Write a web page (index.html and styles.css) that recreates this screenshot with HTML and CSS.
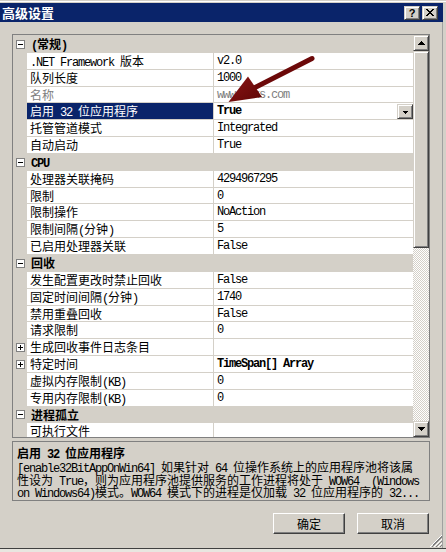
FILE: index.html
```html
<!DOCTYPE html>
<html lang="zh-CN">
<head>
<meta charset="utf-8">
<title>高级设置</title>
<link rel="stylesheet" href="styles.css">
</head>
<body>
<div class="window">
  <div class="titlebar">
    <span class="title">高级设置</span>
    <div class="caps">
      <span class="cap q">?</span>
      <span class="cap"><svg width="8" height="7" viewBox="0 0 8 7"><path d="M0 0h2v1H0zM6 0h2v1H6zM1 1h2v1H1zM5 1h2v1H5zM2 2h4v1H2zM3 3h2v1H3zM2 4h4v1H2zM1 5h2v1H1zM5 5h2v1H5zM0 6h2v1H0zM6 6h2v1H6z"/></svg></span>
    </div>
  </div>
  <div class="content">
    <div class="grid">
      <div class="rows">
        <div class="row cat"><span class="m"><i class="box"></i></span><span class="lbl"><span class="en">(</span>常规<span class="en">)</span></span></div>
        <div class="row"><span class="m"></span><span class="n"><span class="en">.NET Framework </span>版本</span><span class="v">v2.0</span></div>
        <div class="row"><span class="m"></span><span class="n">队列长度</span><span class="v">1000</span></div>
        <div class="row dis"><span class="m"></span><span class="n">名称</span><span class="v">www.xxxs.com</span></div>
        <div class="row sel"><span class="m"></span><span class="n">启用<span class="en"> 32 </span>位应用程序</span><span class="v b">True<span class="drop"><svg width="5" height="3" viewBox="0 0 5 3"><path d="M0 0h5v1H4v1H3v1H2V2H1V1H0z"/></svg></span></span></div>
        <div class="row"><span class="m"></span><span class="n">托管管道模式</span><span class="v">Integrated</span></div>
        <div class="row"><span class="m"></span><span class="n">自动启动</span><span class="v">True</span></div>
        <div class="row cat"><span class="m"><i class="box"></i></span><span class="lbl"><span class="en">CPU</span></span></div>
        <div class="row"><span class="m"></span><span class="n">处理器关联掩码</span><span class="v">4294967295</span></div>
        <div class="row"><span class="m"></span><span class="n">限制</span><span class="v">0</span></div>
        <div class="row"><span class="m"></span><span class="n">限制操作</span><span class="v">NoAction</span></div>
        <div class="row"><span class="m"></span><span class="n">限制间隔<span class="en">(</span>分钟<span class="en">)</span></span><span class="v">5</span></div>
        <div class="row"><span class="m"></span><span class="n">已启用处理器关联</span><span class="v">False</span></div>
        <div class="row cat"><span class="m"><i class="box"></i></span><span class="lbl">回收</span></div>
        <div class="row"><span class="m"></span><span class="n">发生配置更改时禁止回收</span><span class="v">False</span></div>
        <div class="row"><span class="m"></span><span class="n">固定时间间隔<span class="en">(</span>分钟<span class="en">)</span></span><span class="v">1740</span></div>
        <div class="row"><span class="m"></span><span class="n">禁用重叠回收</span><span class="v">False</span></div>
        <div class="row"><span class="m"></span><span class="n">请求限制</span><span class="v">0</span></div>
        <div class="row"><span class="m"><i class="box plus"></i></span><span class="n">生成回收事件日志条目</span><span class="v"></span></div>
        <div class="row"><span class="m"><i class="box plus"></i></span><span class="n">特定时间</span><span class="v b">TimeSpan[] Array</span></div>
        <div class="row"><span class="m"></span><span class="n">虚拟内存限制<span class="en">(KB)</span></span><span class="v">0</span></div>
        <div class="row"><span class="m"></span><span class="n">专用内存限制<span class="en">(KB)</span></span><span class="v">0</span></div>
        <div class="row cat"><span class="m"><i class="box"></i></span><span class="lbl">进程孤立</span></div>
        <div class="row"><span class="m"></span><span class="n">可执行文件</span><span class="v"></span></div>
      </div>
      <div class="vscroll">
        <span class="sbtn"><svg width="7" height="4" viewBox="0 0 7 4"><path d="M3 0h1v1h1v1h1v1h1v1H0V3h1V2h1V1h1z"/></svg></span>
        <span class="thumb"></span>
        <span class="track"></span>
        <span class="sbtn"><svg width="7" height="4" viewBox="0 0 7 4"><path d="M0 0h7v1H6v1H5v1H4v1H3V3H2V2H1V1H0z"/></svg></span>
      </div>
      <svg class="arrow" width="418" height="404" viewBox="12 34 418 404">
        <defs>
          <linearGradient id="ag" x1="0" y1="0" x2="1" y2="1">
            <stop offset="0" stop-color="#8c1616"/>
            <stop offset="1" stop-color="#5e0606"/>
          </linearGradient>
        </defs>
        <line x1="312" y1="58.5" x2="254" y2="88" stroke="#6c0909" stroke-width="5" stroke-linecap="round"/>
        <polygon points="228.5,102 248,76.5 262,97" fill="url(#ag)"/>
      </svg>
    </div>
    <div class="desc">
      <div class="dtitle">启用<span class="en"> 32 </span>位应用程序</div>
      <div class="dline"><span class="en">[enable32BitAppOnWin64] </span>如果针对<span class="en"> 64 </span>位操作系统上的应用程序池将该属</div>
      <div class="dline">性设为<span class="en"> True</span>，则为应用程序池提供服务的工作进程将处于<span class="en"> WOW64&nbsp;&nbsp;(Windows</span></div>
      <div class="dline"><span class="en">on Windows64)</span>模式。<span class="en">WOW64 </span>模式下的进程是仅加载<span class="en"> 32 </span>位应用程序的<span class="en"> 32...</span></div>
    </div>
    <div class="footer">
      <div class="buttons">
        <span class="btn">确定</span>
        <span class="btn">取消</span>
      </div>
      <svg class="grip" width="12" height="12" viewBox="0 0 12 12" shape-rendering="crispEdges">
        <path d="M11 0h1v1h-1zM10 1h1v1h-1zM9 2h1v1H9zM8 3h1v1H8zM7 4h1v1H7zM6 5h1v1H6zM5 6h1v1H5zM4 7h1v1H4zM3 8h1v1H3zM2 9h1v1H2zM1 10h1v1H1zM0 11h1v1H0z M11 4h1v1h-1zM10 5h1v1h-1zM9 6h1v1H9zM8 7h1v1H8zM7 8h1v1H7zM6 9h1v1H6zM5 10h1v1H5zM4 11h1v1H4z M11 8h1v1h-1zM10 9h1v1h-1zM9 10h1v1H9zM8 11h1v1H8z" fill="#fff"/>
        <path d="M12 1v2h-1v1h-1v1H9v1H8v1H7v1H6v1H5v1H4v1H3v1H2v1H1v-1h1v-1h1V9h1V8h1V7h1V6h1V5h1V4h1V3h1V2h1V1z M12 5v2h-1v1h-1v1H9v1H8v1H7v1H6v-1h1v-1h1V9h1V8h1V7h1V6h1V5z M12 9v2h-1v1h-1v-1h1v-1h1V9z" fill="#808080"/>
      </svg>
    </div>
  </div>
</div>
<div class="under"></div>
</body>
</html>
```

FILE: styles.css
```css
* { box-sizing: border-box; margin: 0; padding: 0; }
html, body { background: #d4d0c8; }
body {
  width: 446px;
  height: 552px;
  overflow: hidden;
  font-family: "Noto Sans CJK SC", sans-serif;
  font-size: 12px;
  color: #000;
}
.en { font-family: "Liberation Mono", monospace; letter-spacing: -1.2px; }

.window {
  height: 549px;
  padding-top: 3px;
  border-bottom: 1px solid #404040;
  display: flex;
  flex-direction: column;
  background: linear-gradient(#d4d0c8 0 1px, #fff 1px 2px, #d4d0c8 2px);
}
.titlebar {
  height: 19px;
  margin-right: 3px;
  background: #0a246a;
  display: flex;
  align-items: center;
  padding: 0 5px 0 2px;
  flex: none;
}
.title { flex: 1; color: #fff; font-weight: bold; font-size: 13px; line-height: 19px; }
.caps { display: flex; gap: 2px; }
.cap {
  width: 16px;
  height: 14px;
  display: flex;
  align-items: center;
  justify-content: center;
  background: #d4d0c8;
  border: 1px solid;
  border-color: #d4d0c8 #404040 #404040 #d4d0c8;
  box-shadow: inset 1px 1px #fff, inset -1px -1px #808080;
}
.cap.q { font: bold 11px/1 "Liberation Sans", sans-serif; padding-top: 1px; }

.content {
  flex: 1;
  margin-right: 3px;
  border-right: 1px solid #a0a0a0;
  padding: 12px 0 0 12px;
  display: flex;
  flex-direction: column;
}

.grid {
  width: 418px;
  height: 404px;
  border: 1px solid #808080;
  display: flex;
  position: relative;
  flex: none;
}
.rows {
  width: 400px;
  overflow: hidden;
  padding-top: 1px;
  background: #d4d0c8;
}
.row { display: flex; height: 16.85px; line-height: 16px; white-space: nowrap; }
.m { width: 14px; flex: none; display: flex; align-items: center; padding-left: 3px; }
.n {
  width: 187px;
  flex: none;
  background: #fff;
  border-right: 1px solid #d4d0c8;
  border-bottom: 1px solid #d4d0c8;
  padding-left: 3px;
  overflow: hidden;
}
.v {
  flex: 1;
  background: #fff;
  border-bottom: 1px solid #d4d0c8;
  padding-left: 3px;
  font-family: "Liberation Mono", monospace;
  letter-spacing: -1.2px;
  display: flex;
  justify-content: space-between;
  align-items: flex-start;
}
.v.b { font-weight: bold; }
.dis .n, .dis .v { color: #808080; }
.sel .n { background: #0a246a; color: #fff; }
.drop {
  width: 16px;
  height: 15px;
  margin-top: 1px;
  display: flex;
  align-items: center;
  justify-content: center;
  background: #d4d0c8;
  border: 1px solid;
  border-color: #d4d0c8 #404040 #404040 #d4d0c8;
  box-shadow: inset 1px 1px #fff, inset -1px -1px #808080;
  padding-top: 1px;
}
.cat .lbl { font-weight: bold; padding-left: 4px; }

.box {
  display: block;
  width: 9px;
  height: 9px;
  border: 1px solid #808080;
  background: #fff;
  position: relative;
}
.box::before {
  content: "";
  position: absolute;
  left: 1px;
  top: 3px;
  width: 5px;
  height: 1px;
  background: #000;
}
.box.plus::after {
  content: "";
  position: absolute;
  left: 3px;
  top: 1px;
  width: 1px;
  height: 5px;
  background: #000;
}

.vscroll {
  width: 16px;
  display: flex;
  flex-direction: column;
  background: repeating-conic-gradient(#fff 0 25%, #d4d0c8 0 50%) 0 0 / 2px 2px;
}
.sbtn, .thumb {
  background: #d4d0c8;
  border: 1px solid;
  border-color: #d4d0c8 #404040 #404040 #d4d0c8;
  box-shadow: inset 1px 1px #fff, inset -1px -1px #808080;
}
.sbtn { height: 16px; display: flex; align-items: center; justify-content: center; flex: none; }
.thumb { height: 197px; flex: none; }
.track { flex: 1; }

.arrow { position: absolute; left: -1px; top: -1px; pointer-events: none; }

.desc {
  width: 418px;
  height: 60px;
  margin-top: 3px;
  border: 1px solid #808080;
  padding: 4px 4px 0;
  flex: none;
  white-space: nowrap;
  overflow: hidden;
}
.dtitle { font-weight: bold; height: 15px; line-height: 14px; }
.dline { height: 12.6px; line-height: 12px; }

.footer { display: flex; margin-top: 12px; }
.buttons { width: 417px; display: flex; justify-content: flex-end; gap: 12px; }
.btn {
  width: 72px;
  height: 21px;
  display: flex;
  align-items: center;
  justify-content: center;
  border: 1px solid;
  border-color: #fff #404040 #404040 #fff;
  box-shadow: inset -1px -1px #808080, inset 1px 1px #d4d0c8;
  background: #d4d0c8;
}
.grip { margin: 22px 0 0 1px; flex: none; }

.under { height: 3px; background: #e8e6e0; }
```
